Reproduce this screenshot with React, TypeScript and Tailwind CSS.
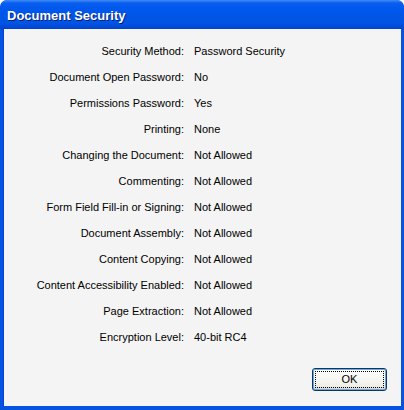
const rows: [string, string][] = [
  ['Security Method:', 'Password Security'],
  ['Document Open Password:', 'No'],
  ['Permissions Password:', 'Yes'],
  ['Printing:', 'None'],
  ['Changing the Document:', 'Not Allowed'],
  ['Commenting:', 'Not Allowed'],
  ['Form Field Fill-in or Signing:', 'Not Allowed'],
  ['Document Assembly:', 'Not Allowed'],
  ['Content Copying:', 'Not Allowed'],
  ['Content Accessibility Enabled:', 'Not Allowed'],
  ['Page Extraction:', 'Not Allowed'],
  ['Encryption Level:', '40-bit RC4'],
];

export default function App() {
  return (
    <div className="w-[404px] h-[410px] flex flex-col rounded-t-[7px] bg-[#0553e0] font-['Liberation_Sans',sans-serif] overflow-hidden">
      {/* title bar */}
      <div className="h-[29px] flex items-center px-[7px] pt-[3px] rounded-t-[7px] bg-[linear-gradient(to_bottom,#3f8cf3_0px,#0a5ef0_3px,#0058ee_8px,#0055e5_18px,#0153e3_24px,#0244cf_28px)]">
        <span className="text-white font-bold text-[13px] [text-shadow:1px_1px_0_#0a1e6e]">
          Document Security
        </span>
      </div>

      <div className="flex-1 flex flex-col mx-[3px] mb-[4px] bg-[#f4f4f4] border-l border-[#0b3ed2]">
        <div className="pt-[9px] grid grid-cols-[180px_1fr] gap-x-[10px] text-[11px] text-black">
          {rows.map(([label, value]) => (
            <div key={label} className="contents">
              <div className="h-[26px] flex items-center justify-end">{label}</div>
              <div className="h-[26px] flex items-center">{value}</div>
            </div>
          ))}
        </div>

        <div className="flex-1" />

        <div className="flex justify-end pr-[14px] pb-[15px]">
          <button className="w-[75px] h-[23px] rounded-[3px] border border-[#003c74] bg-[linear-gradient(to_bottom,#ffffff,#f0f0ea_80%,#d6d0c5)] p-[2px] shadow-[inset_0_0_0_1px_#7da2ce]">
            <div className="w-full h-full border border-dotted border-black flex items-center justify-center text-[11px] text-black">
              OK
            </div>
          </button>
        </div>
      </div>
    </div>
  );
}
